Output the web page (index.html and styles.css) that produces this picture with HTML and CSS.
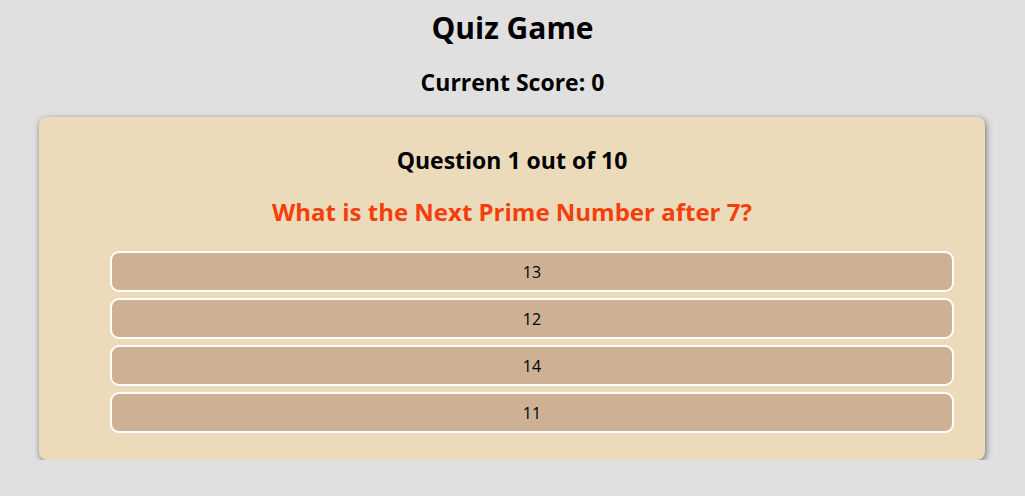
FILE: index.html
```html
<!DOCTYPE html>
<html lang="en">
<head>
<meta charset="utf-8">
<title>Quiz Game</title>
<link rel="stylesheet" href="styles.css">
</head>
<body>
  <h1 class="title">Quiz Game</h1>
  <h2 class="score">Current Score: 0</h2>
  <div class="card">
    <h3 class="counter">Question 1 out of 10</h3>
    <h2 class="question">What is the Next Prime Number after 7?</h2>
    <ul class="answers">
      <li><button class="answer">13</button></li>
      <li><button class="answer">12</button></li>
      <li><button class="answer">14</button></li>
      <li><button class="answer">11</button></li>
    </ul>
  </div>
</body>
</html>
```

FILE: styles.css
```css
html, body {
  margin: 0;
  padding: 0;
}
body {
  background: #e0e0e0;
  font-family: "Open Sans", "Noto Sans", sans-serif;
  color: #000;
  padding-top: 10px;
}
.title {
  margin: 0;
  font-size: 30px;
  line-height: 36px;
  font-weight: 700;
  text-align: center;
}
.score {
  margin: 23px 0 0;
  font-size: 23px;
  line-height: 26px;
  font-weight: 700;
  text-align: center;
}
.card {
  margin: 22px 40px 0 39px;
  background: #ecdbbb;
  border-radius: 8px;
  box-shadow: 1px 2px 6px rgba(0, 0, 0, 0.5);
  padding: 29px 31px 27px;
}
.counter {
  margin: 0;
  font-size: 23px;
  line-height: 28px;
  font-weight: 700;
  text-align: center;
}
.question {
  margin: 23px 0 0;
  font-size: 24px;
  line-height: 30px;
  font-weight: 700;
  color: #f43e0b;
  text-align: center;
}
.answers {
  list-style: none;
  margin: 24px 0 0;
  padding: 0 0 0 40px;
  display: flex;
  flex-direction: column;
  gap: 6px;
}
.answer {
  display: block;
  width: 100%;
  height: 41px;
  background: #ceb194;
  border: 2px solid #ffffff;
  border-radius: 9px;
  font-family: "Open Sans", "Noto Sans", sans-serif;
  font-size: 16px;
  color: #000;
  padding: 0;
  cursor: pointer;
}
```
